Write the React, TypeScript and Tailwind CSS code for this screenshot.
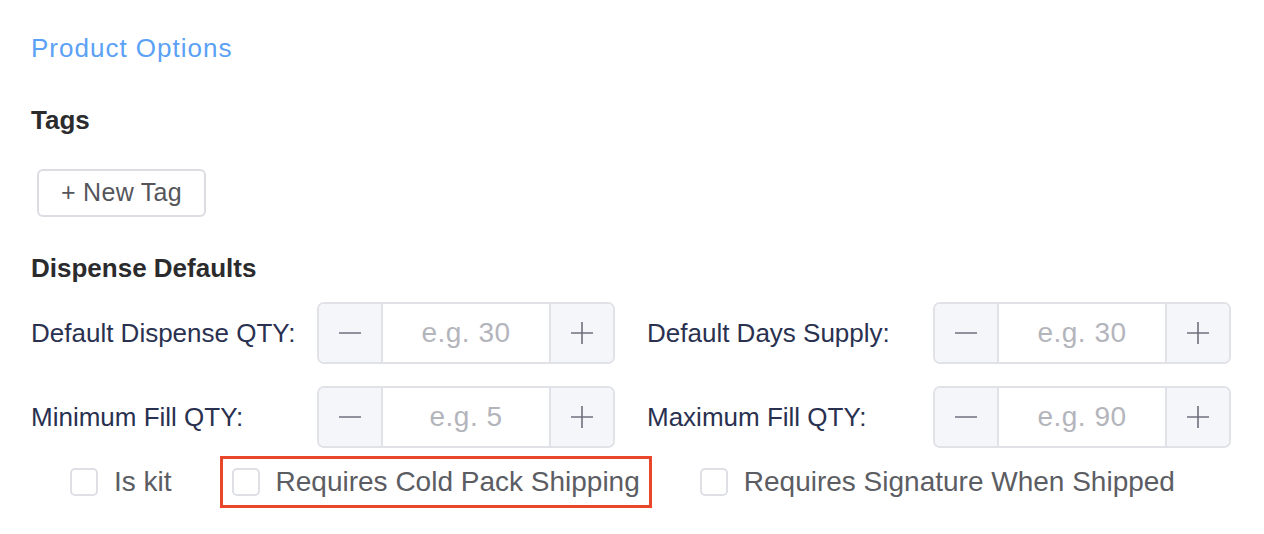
const Line = ({ vertical }: { vertical?: boolean }) => {
  return (
    <svg width="24" height="24" viewBox="0 0 24 24" fill="none" stroke="#6d707c" strokeWidth="1.6">
      <line x1="1" y1="12" x2="23" y2="12" />
      {vertical && <line x1="12" y1="1" x2="12" y2="23" />}
    </svg>
  );
};

const Stepper = ({ placeholder }: { placeholder: string }) => {
  return (
    <div className="flex h-[62px] w-[298px] overflow-hidden rounded-[7px] border-2 border-[#e1e2e8] bg-white">
      <button className="flex w-[62px] items-center justify-center bg-[#f5f6fa]">
        <Line />
      </button>
      <div className="flex flex-1 items-center justify-center border-x-2 border-[#e1e2e8] text-[28px] tracking-[0.5px] text-[#b4b5bc]">{placeholder}</div>
      <button className="flex w-[62px] items-center justify-center bg-[#f5f6fa]">
        <Line vertical />
      </button>
    </div>
  );
};

const Field = ({ label, placeholder }: { label: string; placeholder: string }) => {
  return (
    <div className="flex items-center">
      <span className="w-[286px] text-[26px] text-[#2a3150]">{label}</span>
      <Stepper placeholder={placeholder} />
    </div>
  );
};

const Check = ({ label }: { label: string }) => {
  return (
    <label className="flex items-center gap-[16px]">
      <span className="h-[28px] w-[28px] rounded-[5px] border-2 border-[#dfe0e6] bg-white" />
      <span className="text-[28px] text-[#5c5d63]">{label}</span>
    </label>
  );
};

const App = () => {
  return (
    <div className="h-[534px] w-[1264px] bg-white pl-[31px] pt-[31px]" style={{ fontFamily: '"Liberation Sans", Arial, sans-serif' }}>
      <h2 className="text-[26px] leading-[34px] tracking-[1px] text-[#5ba1f6]">Product Options</h2>
      <h3 className="mt-[38px] text-[26px] font-bold leading-[34px] text-[#2b2b2e]">Tags</h3>
      <button className="ml-[6px] mt-[32px] flex h-[48px] w-[169px] items-center justify-center rounded-[6px] border-2 border-[#dcdde2] text-[25px] tracking-[0.3px] text-[#55565c]">+ New Tag</button>
      <h3 className="mt-[34px] text-[26px] font-bold leading-[34px] text-[#2b2b2e]">Dispense Defaults</h3>
      <div className="mt-[17px] grid w-[1200px] grid-cols-2 gap-x-[32px] gap-y-[22px]">
        <Field label="Default Dispense QTY:" placeholder="e.g. 30" />
        <Field label="Default Days Supply:" placeholder="e.g. 30" />
        <Field label="Minimum Fill QTY:" placeholder="e.g. 5" />
        <Field label="Maximum Fill QTY:" placeholder="e.g. 90" />
      </div>
      <div className="ml-[39px] mt-[8px] flex items-center gap-[48px]">
        <Check label="Is kit" />
        <div className="flex h-[52px] items-center border-[3px] border-[#e8472c] pl-[9px] pr-[9px]">
          <Check label="Requires Cold Pack Shipping" />
        </div>
        <Check label="Requires Signature When Shipped" />
      </div>
    </div>
  );
};

export default App;
